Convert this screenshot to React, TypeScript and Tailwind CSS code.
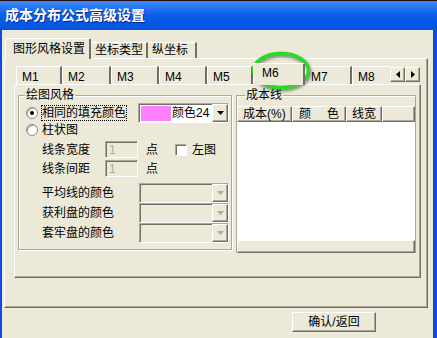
import React from "react";

const raised =
  "border-l border-t border-white border-r border-b border-r-[#716F64] border-b-[#716F64] shadow-[inset_-1px_-1px_0_#ACA899]";
const sunken =
  "border-l border-t border-[#ACA899] border-r border-b border-r-white border-b-white shadow-[inset_1px_1px_0_#716F64]";

function Arrow({ dir, color = "#000" }: { dir: "down" | "left" | "right"; color?: string }) {
  if (dir === "down")
    return (
      <svg width="7" height="4" viewBox="0 0 7 4">
        <polygon points="0,0 7,0 3.5,4" fill={color} />
      </svg>
    );
  if (dir === "left")
    return (
      <svg width="4" height="7" viewBox="0 0 4 7">
        <polygon points="4,0 4,7 0,3.5" fill={color} />
      </svg>
    );
  return (
    <svg width="4" height="7" viewBox="0 0 4 7">
      <polygon points="0,0 0,7 4,3.5" fill={color} />
    </svg>
  );
}

function DropBtn({ disabled }: { disabled?: boolean }) {
  return (
    <div className={`flex h-full w-[16px] items-center justify-center bg-[#ECE9D8] ${raised}`}>
      <Arrow dir="down" color={disabled ? "#ACA899" : "#000"} />
    </div>
  );
}

function Radio({ checked }: { checked?: boolean }) {
  return (
    <div className="flex h-[12px] w-[12px] items-center justify-center rounded-full border border-[#8E8F8F] bg-white shadow-[inset_1px_1px_0_#ACA899]">
      {checked && <div className="h-[4px] w-[4px] rounded-full bg-black" />}
    </div>
  );
}

function InnerTab({ label, w }: { label: string; w: string }) {
  return (
    <div className={`h-[18px] ${w} border-l border-t border-white border-r-2 border-r-[#716F64] pl-[5px] pt-[3px] leading-[14px]`}>
      {label}
    </div>
  );
}

function DisabledCombo() {
  return (
    <div className={`flex h-[20px] w-[90px] justify-end bg-[#ECE9D8] ${sunken}`}>
      <DropBtn disabled />
    </div>
  );
}

export default function App() {
  return (
    <div className="relative flex h-[338px] w-[437px] flex-col overflow-hidden bg-[#ECE9D8] font-['Liberation_Sans','Noto_Sans_CJK_SC',sans-serif] text-[12px] text-black">
      {/* title bar */}
      <div className="flex h-[30px] shrink-0 items-center border-t border-[#2a0a0a] bg-gradient-to-b from-[#3A8BF7] via-[#0A5DE9] to-[#0453E0] pl-[5px] text-[14px] font-bold text-white [text-shadow:1px_1px_0_#0A2A8A]">
        成本分布公式高级设置
      </div>

      {/* body */}
      <div className="flex flex-1 flex-col border-l-2 border-r-4 border-[#0A4BE0]">
        {/* outer tabs */}
        <div className="ml-[3px] mt-[8px] flex h-[20px] items-end">
          <div className="relative z-10 -mb-px h-[21px] w-[86px] rounded-t-[2px] border-l border-t border-white border-r-2 border-r-[#716F64] bg-[#ECE9D8] pl-[7px] pt-[2px] leading-[16px]">
            图形风格设置
          </div>
          <div className="h-[16px] w-[57px] border-t border-white border-r-2 border-r-[#716F64] pl-[4px] leading-[15px]">
            坐标类型
          </div>
          <div className="h-[16px] w-[49px] border-t border-white border-r-2 border-r-[#716F64] pl-[4px] leading-[15px]">
            纵坐标
          </div>
        </div>

        {/* outer panel */}
        <div className={`ml-[2px] flex h-[250px] w-[424px] flex-col bg-[#ECE9D8] ${raised}`}>
          {/* inner tabs */}
          <div className="ml-[11px] mt-[4px] flex h-[21px] items-end">
            <InnerTab label="M1" w="w-[46px]" />
            <InnerTab label="M2" w="w-[49px]" />
            <InnerTab label="M3" w="w-[48px]" />
            <InnerTab label="M4" w="w-[48px]" />
            <InnerTab label="M5" w="w-[46px]" />
            <div className="relative z-10 -mb-px h-[22px] w-[52px] border-l border-t border-white border-r-2 border-r-[#716F64] bg-[#ECE9D8] pl-[8px] pt-[2px] leading-[14px]">
              M6
            </div>
            <InnerTab label="M7" w="w-[47px]" />
            <div className="h-[18px] w-[38px] border-l border-t border-white pl-[5px] pt-[3px] leading-[14px]">
              M8
            </div>
            <div className="mb-[2px] flex">
              <div className={`flex h-[15px] w-[15px] items-center justify-center bg-[#ECE9D8] ${raised}`}>
                <Arrow dir="left" />
              </div>
              <div className={`flex h-[15px] w-[15px] items-center justify-center bg-[#ECE9D8] ${raised}`}>
                <Arrow dir="right" />
              </div>
            </div>
          </div>

          {/* inner panel */}
          <div className={`ml-[9px] flex h-[194px] w-[407px] items-start pl-[3px] pt-[3px] ${raised}`}>
            {/* 绘图风格 */}
            <fieldset className="h-[162px] w-[214px] border border-[#ACA899] shadow-[inset_1px_1px_0_#fff,1px_1px_0_#fff]">
              <legend className="ml-[6px] h-[14px] px-[1px] leading-[14px]">绘图风格</legend>
              <div className="mt-[1px] flex h-[20px] items-center">
                <div className="ml-[7px]">
                  <Radio checked />
                </div>
                <div className="ml-[3px] border border-dotted border-black leading-[14px]">相同的填充颜色</div>
                <div className={`ml-auto mr-[2px] flex h-[20px] w-[91px] items-center bg-white ${sunken}`}>
                  <div className="ml-[2px] h-[15px] w-[30px] bg-[#FF80FF]" />
                  <div className="ml-[1px] flex-1 leading-[14px]">颜色24</div>
                  <DropBtn />
                </div>
              </div>
              <div className="flex h-[13px] items-center">
                <div className="ml-[7px]">
                  <Radio />
                </div>
                <div className="ml-[4px] leading-[14px]">柱状图</div>
              </div>
              <div className="mt-[5px] flex h-[17px] items-center">
                <div className="ml-[23px] w-[63px]">线条宽度</div>
                <div className={`flex h-[17px] w-[33px] items-center pl-[3px] text-[#ACA899] ${sunken}`}>1</div>
                <div className="ml-[8px]">点</div>
                <div className={`ml-[17px] h-[12px] w-[12px] bg-white ${sunken}`} />
                <div className="ml-[5px]">左图</div>
              </div>
              <div className="mt-[2px] flex h-[17px] items-center">
                <div className="ml-[23px] w-[63px]">线条间距</div>
                <div className={`flex h-[17px] w-[33px] items-center pl-[3px] text-[#ACA899] ${sunken}`}>1</div>
                <div className="ml-[8px]">点</div>
              </div>
              <div className="mt-[6px] flex h-[20px] items-center">
                <div className="ml-[23px] w-[97px]">平均线的颜色</div>
                <DisabledCombo />
              </div>
              <div className="flex h-[20px] items-center">
                <div className="ml-[23px] w-[97px]">获利盘的颜色</div>
                <DisabledCombo />
              </div>
              <div className="flex h-[20px] items-center">
                <div className="ml-[23px] w-[97px]">套牢盘的颜色</div>
                <DisabledCombo />
              </div>
            </fieldset>

            {/* 成本线 */}
            <fieldset className="ml-[4px] h-[165px] w-[180px] border border-b-0 border-[#ACA899] shadow-[inset_1px_1px_0_#fff]">
              <legend className="ml-[8px] h-[14px] px-[1px] leading-[14px]">成本线</legend>
              <div className="mt-[4px] flex h-[147px] flex-col">
                <div className="flex h-[16px]">
                  <div className={`w-[55px] pl-[5px] leading-[14px] ${raised}`}>成本(%)</div>
                  <div className={`flex w-[54px] justify-between px-[6px] leading-[14px] ${raised}`}>
                    <span>颜</span>
                    <span>色</span>
                  </div>
                  <div className={`w-[36px] pl-[5px] leading-[14px] ${raised}`}>线宽</div>
                  <div className={`flex-1 ${raised}`} />
                </div>
                <div className="flex-1 bg-white" />
                <div className={`h-[13px] bg-[#ECE9D8] ${raised}`} />
              </div>
            </fieldset>
          </div>
        </div>

        {/* bottom button */}
        <div className={`ml-[290px] mt-[4px] flex h-[20px] w-[84px] items-center justify-center bg-[#ECE9D8] ${raised}`}>
          确认/返回
        </div>
      </div>

      {/* green highlight ellipse drawn over the screenshot */}
      <svg
        className="pointer-events-none absolute left-[249px] top-[49px] [filter:drop-shadow(1px_2px_1.5px_rgba(40,40,20,0.55))]"
        width="64"
        height="44"
        viewBox="0 0 64 44"
      >
        <ellipse cx="32" cy="21.5" rx="27.5" ry="17" fill="none" stroke="#22DD22" strokeWidth="3.5" />
      </svg>
    </div>
  );
}
